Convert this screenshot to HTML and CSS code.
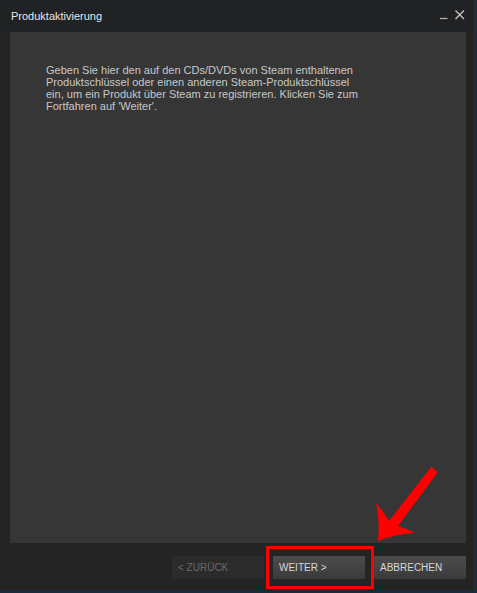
FILE: index.html
```html
<!DOCTYPE html>
<html lang="de">
<head>
<meta charset="utf-8">
<title>Produktaktivierung</title>
<link rel="stylesheet" href="styles.css">
</head>
<body>
<div class="window">
  <div class="titlebar">
    <span class="title">Produktaktivierung</span>
    <svg class="controls" width="26" height="12" viewBox="0 0 26 12">
      <path d="M1 9.5h7.5" stroke="#b4b4b4" stroke-width="1.2"/>
      <path d="M16.5 1.5l8.5 8.5M25 1.5l-8.5 8.5" stroke="#c8c8c8" stroke-width="1.3"/>
    </svg>
  </div>
  <div class="panel">
    <p class="intro">Geben Sie hier den auf den CDs/DVDs von Steam enthaltenen Produktschlüssel oder einen anderen Steam-Produktschlüssel ein, um ein Produkt über Steam zu registrieren. Klicken Sie zum Fortfahren auf 'Weiter'.</p>
  </div>
  <div class="footer">
    <button class="btn disabled">&lt; ZURÜCK</button>
    <span class="highlight"><button class="btn">WEITER &gt;</button></span>
    <button class="btn">ABBRECHEN</button>
  </div>
  <svg class="pointer" width="80" height="90" viewBox="0 0 80 90">
    <path d="M66.5 6.5 L72.5 12.5 L33 66 Q41 68 50 73 Q30 74 13 81 Q15 60 11 43 Q18 51 24 61 Z" fill="#ff0000"/>
  </svg>
</div>
</body>
</html>
```
FILE: styles.css
```css
html, body {
  margin: 0;
  padding: 0;
}
body {
  background: #1e2a3a;
  width: 477px;
  height: 593px;
  overflow: hidden;
  font-family: "Liberation Sans", Arial, sans-serif;
}
.window {
  position: relative;
  width: 474px;
  height: 590px;
  background: #242424;
  border-right: 1px solid #2e3136;
  display: flex;
  flex-direction: column;
}
.titlebar {
  height: 32px;
  display: flex;
  align-items: flex-start;
  justify-content: space-between;
  background: #212223;
}
.title {
  color: #e6e6e6;
  font-size: 11px;
  padding: 10px 0 0 11px;
}
.controls {
  margin: 9px 9px 0 0;
}
.panel {
  margin: 0 8px 0 10px;
  height: 511px;
  background: #363636;
}
.intro {
  margin: 0;
  padding: 32px 0 0 36px;
  width: 318px;
  color: #c8c8c8;
  font-size: 11px;
  line-height: 12px;
}
.footer {
  display: flex;
  justify-content: flex-end;
  gap: 9px;
  padding: 13px 8px 0 0;
}
.btn {
  width: 92px;
  height: 23px;
  border: 0;
  padding: 0 0 0 6px;
  text-align: left;
  font-family: "Liberation Sans", Arial, sans-serif;
  font-size: 10px;
  color: #d8d8d8;
  background: linear-gradient(#4c4c4c, #3a3a3a);
}
.btn.disabled {
  color: #6a6a6a;
  background: #2b2b2b;
}
.highlight {
  position: relative;
  display: flex;
}
.highlight::after {
  content: "";
  position: absolute;
  left: -7px;
  right: -9px;
  top: -10px;
  bottom: -10px;
  border: 3px solid #ff0000;
}
.pointer {
  position: absolute;
  left: 365px;
  top: 460px;
}
```
